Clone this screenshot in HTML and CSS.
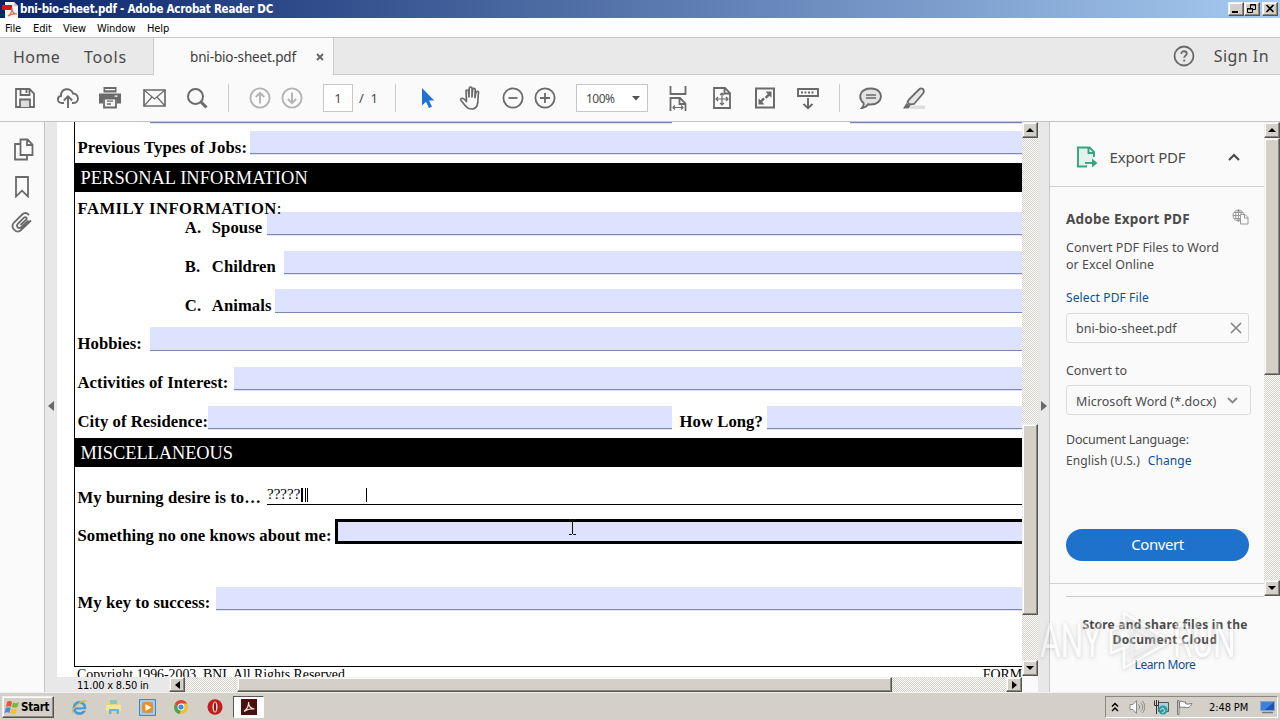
FILE: index.html
```html
<!DOCTYPE html>
<html lang="en">
<head>
<meta charset="utf-8">
<title>bni-bio-sheet.pdf - Adobe Acrobat Reader DC</title>
<link rel="stylesheet" href="styles.css">
</head>
<body>
<div class="screen">
  <header class="titlebar">
    <svg class="app-icon" width="16" height="16" viewBox="0 0 16 16"><path d="M3 0h9l4 4v12H3z" fill="#f6f3f3"/><path d="M12 0v4h4z" fill="#c9c3c3"/><path d="M0 3h10v5H0z" fill="#d8160f"/><path d="M6 14c3-2 4-5 4-8 0 4 2 6 5 6-4-.5-6 0-9 2z" fill="none" stroke="#e06a64" stroke-width="1.100"/></svg>
    <span class="title-text">bni-bio-sheet.pdf - Adobe Acrobat Reader DC</span>
    <div class="win-buttons">
      <span class="bevel wbtn"><svg width="12" height="10"><path d="M2 8h6" stroke="#000" stroke-width="2"/></svg></span>
      <span class="bevel wbtn"><svg width="12" height="10"><path d="M4.500 4V.500h5v5H7M4 1h6M1.500 4.500h5v4h-5zM1 5h6" fill="none" stroke="#000"/></svg></span>
      <span class="bevel wbtn last"><svg width="12" height="10"><path d="M2.500 1l7 7M9.500 1l-7 7" stroke="#000" stroke-width="1.600"/></svg></span>
    </div>
  </header>
  <nav class="menubar"><span class="m1">File</span><span class="m2">Edit</span><span class="m3">View</span><span class="m4">Window</span><span>Help</span></nav>
  <div class="tabs">
    <div class="tabs-left"><span class="home">Home</span><span class="tools">Tools</span></div>
    <div class="tab"><span class="tab-name">bni-bio-sheet.pdf</span><svg width="8" height="8" viewBox="0 0 8 8"><path d="M1 1l6 6M7 1L1 7" stroke="#666" stroke-width="1.900"/></svg></div>
    <div class="tabs-right">
      <svg width="22" height="22" viewBox="0 0 22 22" fill="none" stroke="#6a6a6a" stroke-width="1.800"><circle cx="11" cy="11" r="9.500"/><path d="M8.300 9c0-3.800 5.500-3.400 5.500-.3 0 1.900-2.600 2-2.600 4M11.200 14.500v2"/></svg>
      <span class="signin">Sign In</span>
    </div>
  </div>
  <div class="toolbar">
    <svg class="ic i-save" width="22" height="22" viewBox="0 0 22 22" fill="none" stroke="#6a6a6a" stroke-width="1.800"><path d="M2 2h13.500L20 6.500V20H2z"/><path d="M6.500 2v6h9V2M12.500 3v3"/><path d="M6 20v-7.500h10V20" fill="#ddd"/></svg>
    <svg class="ic i-cloud" width="24" height="22" viewBox="0 0 24 22" fill="none" stroke="#6a6a6a" stroke-width="1.900"><path d="M8 16H6C1 16 .5 9.700 5 9 4.800 1 15 0 17 6.500c6 0 7 9.500.5 9.500H16M12 21V10M7.800 13.500L12 9.300l4.200 4.200"/></svg>
    <svg class="ic i-print" width="22" height="22" viewBox="0 0 22 22" fill="#6a6a6a"><path d="M4.500 0h13v5.500h-13zM0 6.500h22v10h-4v-4H4v4H0z"/><path d="M5 11.500h12v9H5z" fill="#f4f4f4" stroke="#6a6a6a" stroke-width="1.800"/><path d="M8 14.200h6M8 17h4" stroke="#6a6a6a" stroke-width="1.300"/><path d="M15.500 8.500h3v1.300h-3zM6 2h10v1.200H6z" fill="#fff"/></svg>
    <svg class="ic i-mail" width="23" height="18" viewBox="0 0 23 18" fill="none" stroke="#6a6a6a" stroke-width="1.700"><path d="M1 1h21v16H1z"/><path d="M1 1l10.500 9L22 1M1 17l8-9M22 17l-8-9" stroke-width="1.200"/></svg>
    <svg class="ic i-find" width="22" height="22" viewBox="0 0 22 22" fill="none" stroke="#6a6a6a"><circle cx="9.500" cy="9.500" r="7.500" stroke-width="2"/><path d="M15 15l5.500 5.500" stroke-width="3"/></svg>
    <i class="sep s1"></i>
    <svg class="ic i-up" width="22" height="22" viewBox="0 0 22 22" fill="none" stroke="#b4b4b4" stroke-width="1.900"><circle cx="11" cy="11" r="9.600"/><path d="M11 16.500V6M6.800 10L11 5.800l4.200 4.200"/></svg>
    <svg class="ic i-down" width="22" height="22" viewBox="0 0 22 22" fill="none" stroke="#b4b4b4" stroke-width="1.900"><circle cx="11" cy="11" r="9.600"/><path d="M11 5.500V16M6.800 12l4.200 4.200 4.200-4.200"/></svg>
    <span class="pagebox">1</span><span class="pages">/&nbsp; 1</span>
    <i class="sep s2"></i>
    <svg class="ic i-arrow" width="14" height="22" viewBox="0 0 14 22"><path d="M1 1v17.500l4-3.800L8 21l3-1.300-3-6.200h5.200z" fill="#1f72d2"/></svg>
    <svg class="ic i-hand" width="24" height="24" viewBox="0 0 24 24" fill="none" stroke="#6a6a6a" stroke-width="1.700" stroke-linejoin="round" stroke-linecap="round"><path d="M7.500 14L7 5.500c-.2-2 2.300-2 2.500 0L10 11l.2-8.500c0-2 2.800-2 2.800 0V11l.6-7.500c.2-1.800 2.700-1.500 2.600.3l-.3 7.700 1-5c.4-1.700 2.900-1.300 2.700.5C18 11 21.500 23 12.500 23 7 23 6.500 19 2 14.500c-1.200-1.200.5-2.800 2-2 1.200.5 2.500 1.500 3.500 3"/></svg>
    <svg class="ic i-minus" width="22" height="22" viewBox="0 0 22 22" fill="none" stroke="#6a6a6a" stroke-width="1.800"><circle cx="11" cy="11" r="9.600"/><path d="M6.500 11h9"/></svg>
    <svg class="ic i-plus" width="22" height="22" viewBox="0 0 22 22" fill="none" stroke="#6a6a6a" stroke-width="1.800"><circle cx="11" cy="11" r="9.600"/><path d="M6 11h10M11 6v10"/></svg>
    <span class="zoombox">100%<svg width="8" height="5"><path d="M0 0h8L4 4.500z" fill="#555"/></svg></span>
    <svg class="ic i-width" width="18" height="25" viewBox="0 0 18 25" fill="none" stroke="#6a6a6a" stroke-width="1.800"><path d="M1.500 0v8h15V0M1.500 25V12h9.500l5.500 5.500V25M10.500 12v6h6"/><path d="M4 21.500h10M6 19.500l-2 2 2 2M12 19.500l2 2-2 2" stroke-width="1.200"/></svg>
    <svg class="ic i-fit" width="18" height="22" viewBox="0 0 18 22" fill="none" stroke="#6a6a6a" stroke-width="1.800"><path d="M1 1h11l5 5v15H1zM11.500 1v5.500H17"/><path d="M3.500 12h11M9 6.500v11M5 10l-2 2 2 2M13 10l2 2-2 2M7 8l2-2 2 2M7 16l2 2 2-2" stroke-width="1.200"/></svg>
    <svg class="ic i-full" width="20" height="22" viewBox="0 0 20 22"><path d="M1 1.500h18v19H1z" fill="none" stroke="#6a6a6a" stroke-width="2"/><path d="M16.500 4.500v6.200l-2-2-3 3-1.700-1.700 3-3-2.200-2.500zM3.500 17.500v-6.200l2 2 2.700-2.700 1.700 1.700-2.700 2.700 2.200 2.500z" fill="#6a6a6a"/></svg>
    <svg class="ic i-tray" width="22" height="23" viewBox="0 0 22 23" fill="none" stroke="#6a6a6a" stroke-width="1.900"><path d="M1 2h20v7H1z"/><path d="M4 5.500h14" stroke-dasharray="2 1.500"/><path d="M11 11v10M6.500 17l4.500 4.300 4.500-4.300"/></svg>
    <i class="sep s3"></i>
    <svg class="ic i-note" width="24" height="22" viewBox="0 0 24 22" fill="#e3e3e3" stroke="#6a6a6a" stroke-width="1.900"><path d="M12 1.500c13.500 0 13 16 0 16-1 0-2-.1-3-.3-1 2-3 3.500-6 3.800 1.500-1.500 2-3 1.500-5C-1.500 10.500 1 1.500 12 1.500z"/><path d="M7 8h10M7 11h10" stroke-width="1.300"/></svg>
    <svg class="ic i-pen" width="24" height="23" viewBox="0 0 24 23"><path d="M9 18.500h14V22H8z" fill="#ddd"/><path d="M7 12.500L17 2.500c2.500-2.500 6.500 0 4 4L12 17l-4.500.5-2-2.500z" fill="#e6e6e6" stroke="#6a6a6a" stroke-width="1.800"/><path d="M4.500 16l4 3-2 2.500H1z" fill="#6a6a6a"/></svg>
  </div>

  <main class="main">
    <aside class="rail">
      <svg width="20" height="23" viewBox="0 0 20 23" fill="none" stroke="#6a6a6a" stroke-width="1.800"><path d="M6.500 1.500h7l5 5V17h-12zM13 1.500v5.500h5.500M6 6H1v15.500h12V17.500"/></svg>
      <svg width="16" height="22" viewBox="0 0 16 22" fill="none" stroke="#6a6a6a" stroke-width="1.800"><path d="M2 1h12v19.500l-6-5.800-6 5.800z"/></svg>
      <svg width="22" height="22" viewBox="0 0 22 22" fill="none" stroke="#6a6a6a" stroke-width="1.800" stroke-linecap="round"><path d="M17 10l-6.500 6c-3 2.500-6-.5-3.500-3.300l6-6c1.600-1.500 3.600.3 2.200 2L10 13.500M17.500 3.500c-2-2-4.500-1.700-6.300 0L3 11.500C-1 16 4.500 23 9.500 19.500L19.500 10"/></svg>
    </aside>
    <div class="gutter g-left"><svg width="6" height="10"><path d="M6 0v10L0 5z" fill="#6a6a6a"/></svg></div>
    <section class="viewer">
      <div class="page">
        <div class="sheet">
          <div class="top-lines"><i></i><i></i></div>
          <div class="row r-jobs"><label>Previous Types of Jobs:</label><span class="field"></span></div>
          <h2 class="bar">PERSONAL INFORMATION</h2>
          <div class="family">FAMILY INFORMATION<span>:</span></div>
          <div class="row r-spouse"><label><b>A.</b>Spouse</label><span class="field"></span></div>
          <div class="row r-child"><label><b>B.</b>Children</label><span class="field"></span></div>
          <div class="row r-animal"><label><b>C.</b>Animals</label><span class="field"></span></div>
          <div class="row r-hobby"><label>Hobbies:</label><span class="field"></span></div>
          <div class="row r-act"><label>Activities of Interest:</label><span class="field"></span></div>
          <div class="row r-city"><label>City of Residence:</label><span class="field city"></span><label class="howlong">How Long?</label><span class="field"></span></div>
          <h2 class="bar bar2">MISCELLANEOUS</h2>
          <div class="row r-desire"><label>My burning desire is to…</label><span class="filled">?????<i class="caret c1"></i><i class="caret c2"></i><i class="caret c3"></i></span></div>
          <div class="row r-some"><label>Something no one knows about me:</label><span class="active"></span></div>
          <div class="row r-key"><label>My key to success:</label><span class="field"></span></div>
        </div>
        <div class="foot"><span>Copyright 1996-2003&nbsp; BNI&nbsp; All Rights Reserved</span><span>FORM</span></div>
        <svg class="ibeam" width="9" height="17" viewBox="0 0 9 17"><path d="M1 .500h2.500l1 1 1-1H8M1 15.500h2.500l1-1 1 1H8M4.500 1v14" fill="none" stroke="#111"/></svg>
      </div>
      <div class="hscroll">
        <span class="dims">11.00 x 8.50 in</span>
        <span class="bevel sbtn"><svg width="5" height="8"><path d="M5 0v8L0 4z"/></svg></span>
        <span class="track th1"></span><span class="bevel thumb-h"></span><span class="track th2"></span>
        <span class="bevel sbtn"><svg width="5" height="8"><path d="M0 0v8l5-4z"/></svg></span>
      </div>
    </section>
    <div class="vscroll">
      <span class="bevel vbtn"><svg width="8" height="4"><path d="M0 4h8L4 0z"/></svg></span>
      <span class="track tv1"></span><span class="bevel thumb-v"></span><span class="track tv2"></span>
      <span class="bevel vbtn"><svg width="8" height="4"><path d="M0 0h8L4 4z"/></svg></span>
    </div>
    <div class="gutter g-right"><svg width="6" height="10"><path d="M0 0v10l6-5z" fill="#6a6a6a"/></svg></div>
    <aside class="panel">
      <div class="panel-top">
        <div class="panel-body">
          <div class="panel-head">
            <svg width="21" height="22" viewBox="0 0 21 22" fill="none" stroke="#34a67f" stroke-width="1.900"><path d="M10 20.500H1V1.500h11.500L17 6v5M11.500 1.500V7H17" fill="#e2f1ec"/><path d="M8 17h10" /><path d="M15 12.500l5.500 4.500-5.500 4.500z" fill="#34a67f" stroke="none"/></svg>
            <span>Export PDF</span>
            <svg class="chev" width="12" height="8" viewBox="0 0 12 8"><path d="M1 7l5-5 5 5" fill="none" stroke="#4b4b4b" stroke-width="2.200"/></svg>
          </div>
          <div class="panel-content">
            <div class="p-title"><span>Adobe Export PDF</span><svg width="17" height="16" viewBox="0 0 17 16" fill="none" stroke="#999"><circle cx="6.500" cy="6.500" r="5.500"/><path d="M6.500 1v11M1 6.500h11M2 3.500h9M2 9.500h9M6.500 1c-4 3-4 8 0 11M6.500 1c4 3 4 8 0 11"/><path d="M8.500 5.500h4.500l3 3v6.500H8.500zM12.500 5.500V9H16" fill="#fafafa"/></svg></div>
            <p class="p-desc">Convert PDF Files to Word<br><span>or Excel Online</span></p>
            <a class="p-select">Select PDF File</a>
            <div class="inp"><span>bni-bio-sheet.pdf</span><svg width="12" height="12"><path d="M1 1l10 10M11 1L1 11" stroke="#888" stroke-width="1.700"/></svg></div>
            <div class="p-conv">Convert to</div>
            <div class="inp sel"><span>Microsoft Word (*.docx)</span><svg width="11" height="7"><path d="M1 1l4.500 4.500L10 1" fill="none" stroke="#888" stroke-width="1.800"/></svg></div>
            <div class="p-lang">Document Language:</div>
            <div class="p-eng"><span>English (U.S.)</span><a>Change</a></div>
            <button class="convert">Convert</button>
          </div>
          <div class="p-end"></div>
        </div>
        <div class="vscroll pscroll">
          <span class="bevel vbtn"><svg width="8" height="4"><path d="M0 4h8L4 0z"/></svg></span>
          <span class="bevel pthumb"></span><span class="track ptrack"></span>
          <span class="bevel vbtn"><svg width="8" height="4"><path d="M0 0h8L4 4z"/></svg></span>
        </div>
      </div>
      <div class="promo">
        <div class="promo-line"></div>
        <div class="store">Store and share files in the</div>
        <div class="store cloud">Document Cloud</div>
        <a class="learn">Learn More</a>
      </div>
    </aside>
  </main>

  <footer class="taskbar">
    <div class="bevel start"><svg width="16" height="15" viewBox="0 0 16 15"><path d="M3 2c2-1.500 3.500-1 5 0L7 7C5.500 6 4 6 2 7z" fill="#e8562a"/><path d="M9 2.500c2 1 4 1 6-.5l-1.500 5c-2 1-3.500 1-5.500 0z" fill="#7ab735"/><path d="M1.700 8c2-1 3.500-1 5 0l-1.200 5c-1.500-1-3-1-5 0z" fill="#4a8ddd"/><path d="M7.700 8.500c2 1 3.500 1 5.500 0l-1.500 5c-2 1-3.500 1-5.300 0z" fill="#f6c32c"/></svg><span>Start</span></div>
    <svg class="t1" width="17" height="17" viewBox="0 0 17 17" fill="none"><circle cx="8.500" cy="9" r="5.600" stroke="#3f9bdc" stroke-width="2.600"/><path d="M4 9.500h10" stroke="#3f9bdc" stroke-width="2.200"/><path d="M1.500 14.500C0 10 11 0 15.500 2.500" stroke="#e9b93a" stroke-width="1.300"/><path d="M10 11h6" stroke="#d4d0c8" stroke-width="1.500"/></svg>
    <svg class="t2" width="17" height="16" viewBox="0 0 17 16"><path d="M1 3h6l1 1h7v10H1z" fill="#e9d679"/><path d="M5 1h7v4H5z" fill="#8ec7b8"/><path d="M1 6h15v6H1z" fill="#f4e69d"/><path d="M4 15v-5h10v5h-2.500v-3h-5v3z" fill="#6db4dc"/></svg>
    <svg class="t3" width="17" height="17" viewBox="0 0 17 17"><path d="M.5.500h16v16H.5z" fill="#79b5e2" stroke="#4787b8"/><path d="M2 2h13v13H2z" fill="none" stroke="#cfe5f5"/><circle cx="8.500" cy="8.500" r="5.800" fill="#f28c1b"/><path d="M6.500 5l6 3.500-6 3.500z" fill="#fff"/></svg>
    <svg class="t4" width="14" height="14" viewBox="0 0 14 14"><circle cx="7" cy="7" r="7" fill="#f0bf2e"/><path d="M1 3.500A7 7 0 0 1 13.100 3.500H7L4 8z" fill="#d9453a"/><path d="M1 3.500L5 10l2 0-1.500 4C0 13-1 7 1 3.500z" fill="#4ba354"/><circle cx="7" cy="7" r="3.400" fill="#fff"/><circle cx="7" cy="7" r="2.600" fill="#4688e8"/></svg>
    <svg class="t5" width="16" height="16" viewBox="0 0 16 16"><ellipse cx="8" cy="8" rx="7.500" ry="7.700" fill="#c21c1c"/><ellipse cx="8" cy="8" rx="2.500" ry="5.600" fill="#f1e5e1"/><ellipse cx="8" cy="8" rx="1.100" ry="4.700" fill="#941010"/></svg>
    <div class="task-active"><svg width="16" height="16" viewBox="0 0 16 16"><path d="M0 0h16v16H0z" fill="#4b0f10"/><path d="M3 12.500C6 10 8 6 7.500 3c0 4 2.500 7 6 7-4-.8-7 0-10.500 2.500z" fill="none" stroke="#f1dede" stroke-width="1.200"/></svg></div>
    <div class="tray">
      <svg width="8" height="10" viewBox="0 0 8 10" class="ty1"><path d="M1 4.500l3-3 3 3M1 9l3-3 3 3" fill="none" stroke="#000" stroke-width="1.500"/></svg>
      <svg class="ty2" width="16" height="14" viewBox="0 0 16 14" fill="#fff" stroke="#888"><path d="M1 4.500h3l3.500-4v13l-3.500-4H1z"/><path d="M9.500 4.500c1.500 1.500 1.500 3.500 0 5M11.500 2.500c3 3 3 6 0 9M13.500 1c3 4 3 8 0 12" fill="none"/></svg>
      <svg class="ty3" width="16" height="15" viewBox="0 0 16 15"><path d="M5.500 2.500h10v9h-10z" fill="#a8cfe3" stroke="#555"/><path d="M1.500.500v5h4v-5M3.500 0v14" fill="none" stroke="#333"/><circle cx="10" cy="10" r="4.500" fill="#2a9da0"/><path d="M7 10l3-2 2 3-3 2" fill="none" stroke="#bfe9d8"/></svg>
      <svg class="ty4" width="16" height="15" viewBox="0 0 16 15" fill="#fff" stroke="#777"><path d="M.5.500H2V14.500H.5zM2.500 1.500c3-1 4 1 6 .5v1.500c2 1.500 4 0 6.500 0-1 2-3 5-6.500 4V7c-2 1-4-.5-6 .5z"/></svg>
      <span class="clock">2:48 PM</span>
      <svg class="ty5" width="15" height="13" viewBox="0 0 15 13"><path d="M.5.500h14v9H.5z" fill="#1855b8" stroke="#88a3cc"/><path d="M1 1h13L5 9H1z" fill="#3b82dc"/><path d="M2 11.500h11" stroke="#777" stroke-width="1.500"/></svg>
    </div>
  </footer>

  <div class="watermark"><span>ANY</span><svg width="66" height="66" viewBox="0 0 66 66" fill="none" stroke-linejoin="round"><path d="M17 5l46 28-46 27V40L4 45V22l13-4z" stroke="#fff" stroke-width="2.500"/><path d="M25 18l25 15-25 15zM11 26v12" stroke="#e2e2e2" stroke-width="3"/></svg><span>RUN</span></div>
</div>
</body>
</html>
```
FILE: styles.css
```css
* { box-sizing: border-box; }
body { margin: 0; }
svg { display: block; flex: none; }
.screen { position: relative; width: 1280px; height: 720px; overflow: hidden; display: flex; flex-direction: column; background: #fafafa; font-family: "Noto Sans", sans-serif; color: #4b4b4b; white-space: nowrap; }
.bevel { background: #d4d0c8; border: 1px solid; border-color: #f2f0ec #555 #555 #f2f0ec; box-shadow: inset -1px -1px #8c8880, inset 1px 1px #fff; display: flex; align-items: center; justify-content: center; flex: none; }

/* Window frame */
.titlebar { height: 18px; flex: none; display: flex; align-items: center; padding: 0 2px; background: linear-gradient(90deg, #0a246a, #a6caf0); }
.app-icon { margin-top: 1px; }
.title-text { margin-left: 2px; color: #fff; font: bold 11.500px/18px "DejaVu Sans Condensed", sans-serif; letter-spacing: -.24px; }
.win-buttons { margin-left: auto; display: flex; }
.wbtn { width: 16px; height: 14px; }
.wbtn.last { margin-left: 2px; }
.menubar { height: 20px; flex: none; display: flex; border-bottom: 1px solid #c9c9c9; padding-left: 5px; background: #fdfdfd; color: #000; font: 11px/21px "DejaVu Sans Condensed", sans-serif; letter-spacing: -.1px; }
.m1 { width: 28px; }
.m2 { width: 30px; }
.m3 { width: 34px; }
.m4 { width: 50px; }
.tabs { height: 37px; flex: none; display: flex; background: #e9e9e9; font-size: 16px; line-height: 38px; }
.tabs-left { width: 154px; display: flex; border-right: 1px solid #cbcbcb; border-bottom: 1px solid #cbcbcb; padding-left: 13px; letter-spacing: .45px; }
.home { width: 71px; }
.tools { letter-spacing: .8px; }
.tab { width: 179px; background: #fafafa; display: flex; align-items: center; padding-left: 36px; color: #3c3c3c; font-size: 13.500px; letter-spacing: -.15px; }
.tab-name { width: 126px; padding-top: 1px; }
.tabs-right { flex: 1; border-left: 1px solid #cbcbcb; border-bottom: 1px solid #cbcbcb; display: flex; align-items: center; justify-content: flex-end; padding-right: 11px; gap: 19px; }
.signin { letter-spacing: .45px; }

/* Toolbar */
.toolbar { height: 47px; flex: none; display: flex; align-items: center; border-bottom: 1px solid #c4c4c4; padding-left: 14px; }
.i-cloud { margin-left: 20px; }
.i-print { margin-left: 19px; }
.i-mail { margin-left: 22px; }
.i-find { margin-left: 20px; }
.sep { width: 1px; height: 28px; background: #ccc; flex: none; }
.s1 { margin-left: 20px; }
.i-up { margin-left: 20px; }
.i-down { margin-left: 10px; }
.pagebox { width: 30px; height: 28px; flex: none; margin-left: 20px; border: 1px solid #c6c6c6; background: #fff; text-align: center; font-size: 13px; line-height: 26px; }
.pages { margin-left: 6px; width: 22px; font-size: 13px; }
.s2 { margin-left: 14px; }
.i-arrow { margin-left: 25px; }
.i-hand { margin-left: 24px; }
.i-minus { margin-left: 19px; }
.i-plus { margin-left: 10px; }
.zoombox { width: 72px; height: 28px; flex: none; margin-left: 20px; border: 1px solid #c6c6c6; background: #fff; display: flex; align-items: center; justify-content: space-between; padding: 0 7px 0 9px; font-size: 12px; letter-spacing: -.5px; }
.i-width { margin-left: 21px; }
.i-fit { margin-left: 26px; }
.i-full { margin-left: 24px; }
.i-tray { margin-left: 22px; }
.s3 { margin-left: 20px; }
.i-note { margin-left: 19px; }
.i-pen { margin-left: 19px; }

/* Main area */
.main { flex: 1; min-height: 0; display: flex; }
.rail { width: 45px; flex: none; border-right: 1px solid #c4c4c4; padding: 16px 0 0 14px; display: flex; flex-direction: column; gap: 15px; }
.rail svg:nth-child(3) { margin: -2px 0 0 -3px; }
.gutter { width: 12px; flex: none; background: #e8e8e8; padding: 279px 0 0 3px; }
.g-right { border-right: 1px solid #c8c8c8; }
.viewer { width: 965px; flex: none; display: flex; flex-direction: column; }
.page { position: relative; height: 555px; flex: none; overflow: hidden; background: #fff; padding-left: 17px; font: 16.670px/24px "Liberation Serif", serif; color: #000; }
.sheet { height: 545px; border-left: 1px solid #000; border-bottom: 1px solid #000; }
.top-lines { display: flex; justify-content: space-between; padding-left: 75px; height: 9px; }
.top-lines i { width: 522px; height: 2px; border-top: 1px solid #8086b4; background: #dde3ff; }
.top-lines i + i { width: 172px; }
.row { display: flex; height: 24px; }
.row label { flex: none; padding: 4px 0 0 2.500px; font-weight: bold; letter-spacing: .06px; }
.row label b { display: inline-block; width: 27px; }
.field { flex: 1; height: 24px; background: linear-gradient(#8086b4, #8086b4) 0 22px / 100% 1px no-repeat #dde3ff; }
.bar { margin: 0; height: 29px; padding-left: 5.500px; background: #000; color: #fff; font: 18.400px/30px "Liberation Serif", serif; letter-spacing: .08px; }
.bar2 { letter-spacing: -.06px; }
.family { position: relative; height: 20px; padding: 5px 0 0 2.500px; font-weight: bold; letter-spacing: .46px; }
.family span { font-weight: normal; }
.r-jobs { height: 32px; }
.row.r-jobs label { width: 175px; padding-top: 5px; letter-spacing: .11px; }
.row.r-spouse label, .row.r-child label, .row.r-animal label { padding-left: 109.800px; }
.r-spouse { height: 39px; }
.r-spouse label { width: 192px; }
.r-child { height: 38px; }
.r-child label { width: 209px; }
.r-animal { height: 38px; }
.row.r-animal label { width: 200px; padding-top: 5px; }
.row.r-animal .field, .row.r-hobby .field { background-position: 0 23px; }
.r-hobby { height: 40px; }
.row.r-hobby label { width: 75px; padding-top: 5px; }
.r-act { height: 39px; }
.r-act label { width: 159px; }
.r-city { height: 32px; }
.r-city label { width: 133px; }
.field.city { flex: 0 0 464px; }
.row.r-city .howlong { width: 95px; padding-left: 7.500px; }
.r-desire { height: 38px; margin-top: 14px; }
.row.r-desire label { width: 192px; padding-top: 5px; }
.filled { position: relative; flex: 1; height: 24px; border-bottom: 1px solid #000; font-size: 15px; line-height: 27px; }
.caret { position: absolute; top: 7px; width: 1px; height: 14px; background: #000; }
.c1 { left: 34px; width: 2px; }
.c2 { left: 38px; box-shadow: 2px 0 #000; }
.c3 { left: 99px; }
.r-some { height: 68px; }
.row.r-some label { width: 260px; padding-top: 5px; }
.active { flex: 1; height: 25px; border: 3px solid #000; border-right: 0; background: linear-gradient(#e3dffa, #dbe4ff); }
.r-key label { width: 141px; }
.foot { display: flex; justify-content: space-between; padding-left: 3px; font-size: 13.900px; line-height: 16px; letter-spacing: -.04px; }
.ibeam { position: absolute; left: 511px; top: 397px; }
.hscroll { height: 15px; display: flex; background: #e8e8e8; }
.dims { width: 112px; padding-left: 20px; color: #000; font: 11px/17px "DejaVu Sans Condensed", sans-serif; letter-spacing: -.2px; }
.sbtn { width: 16px; height: 15px; }
.track { background: repeating-conic-gradient(#fff 0 25%, #d4d0c8 0 50%) 0 0 / 2px 2px; flex: none; }
.th1 { width: 52px; }
.thumb-h { width: 655px; height: 15px; }
.th2 { flex: 1; }
.vscroll { width: 16px; flex: none; display: flex; flex-direction: column; background: #fafafa; }
.vbtn { height: 16px; width: 16px; }
.tv1 { height: 286px; }
.thumb-v { height: 191px; }
.tv2 { height: 45px; }

/* Export panel */
.panel { flex: 1; display: flex; flex-direction: column; }
.panel-top { height: 474px; display: flex; }
.panel-body { width: 214px; }
.panel-head { height: 65px; border-bottom: 1px solid #d2d2d2; display: flex; align-items: center; padding: 5px 24px 0 27px; font-size: 15px; letter-spacing: -.2px; }
.panel-head span { margin-left: 11.500px; }
.chev { margin-left: auto; }
.panel-content { height: 396px; padding: 22px 0 0 16px; display: flex; flex-direction: column; font-size: 12px; }
.p-title { height: 20px; display: flex; justify-content: space-between; padding-right: 15px; font: bold 13.500px/21px "Noto Sans", sans-serif; letter-spacing: .25px; }
.p-desc { margin: 10px 0 0; font-size: 12.500px; line-height: 17px; letter-spacing: .04px; }
a { color: #0d4f96; }
.p-select { margin-top: 16px; line-height: 17px; letter-spacing: .12px; }
.inp { width: 183px; height: 30px; flex: none; margin-top: 7px; border: 1px solid #dcdcdc; border-radius: 3px; display: flex; align-items: center; justify-content: space-between; padding: 0 6px 0 9px; font-size: 12.500px; }
.p-conv { margin-top: 19px; line-height: 18px; font-size: 12.500px; letter-spacing: -.06px; }
.inp.sel { width: 185px; margin-top: 5px; padding-right: 12px; letter-spacing: .06px; }
.inp.sel span { padding-top: 3px; }
.p-lang { margin-top: 16px; line-height: 18px; font-size: 12.500px; letter-spacing: -.2px; }
.p-eng { display: flex; gap: 8px; margin-top: 3px; line-height: 18px; letter-spacing: .08px; }
.convert { width: 183px; height: 32px; flex: none; margin-top: 59px; border: 0; border-radius: 16px; background: #1f72cc; color: #fff; font: 15px/30px "Noto Sans", sans-serif; letter-spacing: -.4px; padding: 0 0 2px; }
.p-end { border-top: 1px solid #d2d2d2; }
.pthumb { height: 237px; }
.ptrack { flex: 1; }
.promo { flex: 1; text-align: center; padding-left: 16px; }
.promo-line { height: 1px; width: 198px; background: #ccc; }
.store { width: 198px; margin-top: 20px; font: bold 12px/15px "Noto Sans", sans-serif; letter-spacing: .2px; }
.store.cloud { margin-top: 0; letter-spacing: .4px; }
.learn { display: block; width: 198px; margin-top: 9px; font-size: 12px; line-height: 18px; letter-spacing: -.4px; }

/* Taskbar */
.taskbar { height: 28px; flex: none; display: flex; align-items: center; background: #d4d0c8; border-top: 1px solid #f4f2ee; padding: 1px 2px 0; }
.start { width: 52px; height: 22px; justify-content: flex-start; padding-left: 1px; color: #000; font: bold 11.500px "DejaVu Sans Condensed", sans-serif; letter-spacing: -.25px; }
.start span { margin-left: 1px; }
.t1 { margin-left: 17px; }
.t2 { margin-left: 17px; }
.t3 { margin-left: 17px; }
.t4 { margin-left: 18px; }
.t5 { margin-left: 19px; }
.task-active { width: 31px; height: 22px; margin-left: 10px; background: #fff; border: 1px solid; border-color: #555 #fff #fff #555; display: flex; align-items: center; justify-content: center; }
.tray { margin-left: auto; width: 173px; height: 22px; border: 1px solid; border-color: #8c8880 #fff #fff #8c8880; display: flex; align-items: center; }
.ty1 { margin-left: 5px; }
.ty2 { margin-left: 10px; }
.ty3 { margin-left: 8px; }
.ty4 { margin-left: 8px; }
.clock { width: 51px; margin-left: 16px; color: #000; font: 11px "DejaVu Sans Condensed", sans-serif; letter-spacing: -.1px; }

.watermark { position: absolute; left: 1040px; top: 608px; display: flex; align-items: center; opacity: .45; color: #fff; font: 48px/66px Roboto, sans-serif; filter: drop-shadow(0 1px 2px #999); }
.watermark span { display: block; transform: scaleX(.66); transform-origin: left; width: 66px; }
.watermark svg { margin-left: 1px; }
```
